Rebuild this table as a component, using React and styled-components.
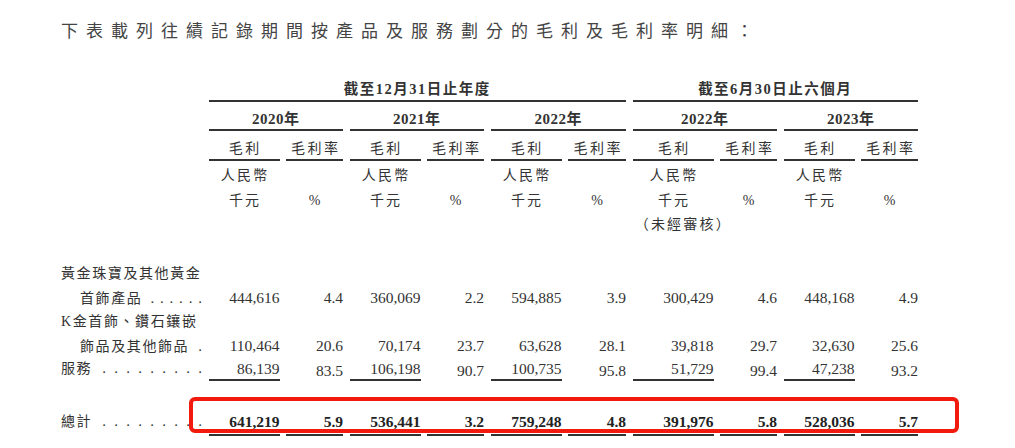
import React from "react";
import styled, { createGlobalStyle, css } from "styled-components";

const Global = createGlobalStyle`
  html, body { margin: 0; padding: 0; background: #ffffff; }
  body { font-family: "Liberation Serif", "Noto Sans CJK TC", serif; color: #333; }
`;

const Page = styled.div`
  position: relative;
  width: 1015px;
  height: 448px;
  overflow: hidden;
  box-sizing: border-box;
  padding: 16px 0 0 61px;
`;

const Title = styled.h1`
  margin: 0 0 35px 0;
  font-family: "Noto Sans CJK TC", sans-serif;
  font-weight: 400;
  font-size: 17px;
  line-height: 27px;
  height: 27px;
  letter-spacing: 8px;
  color: #444;
  white-space: nowrap;
`;

const Table = styled.div`
  display: grid;
  grid-template-columns: 141px 71px 57px 71px 57px 71px 58px 81px 57px 71px 57px;
  column-gap: 6.5px;
  color: #333;
`;

const Cjk = css`
  font-family: "Liberation Serif", "Noto Sans CJK TC", serif;
`;

const Blank = styled.div``;

const GroupHead = styled.div`
  ${Cjk};
  grid-column: span ${(p) => p.$span};
  text-align: center;
  font-weight: 700;
  font-size: 14.5px;
  letter-spacing: 1.5px;
  line-height: 22px;
  height: 22px;
  border-bottom: 2px solid #333;
`;

const YearHead = styled.div`
  ${Cjk};
  grid-column: span 2;
  text-align: center;
  font-weight: 700;
  font-size: 15px;
  letter-spacing: 0.5px;
  padding-top: 7px;
  line-height: 20px;
  height: 20px;
  border-bottom: 2px solid #333;
`;

const SubHead = styled.div`
  ${Cjk};
  text-align: center;
  font-size: 14px;
  letter-spacing: 2.4px;
  padding: 7px 0 0 2.4px;
  line-height: 21px;
  height: 21px;
  border-bottom: 2px solid #333;
`;

const Unit = styled.div`
  ${Cjk};
  text-align: center;
  font-size: 14px;
  letter-spacing: 2.2px;
  padding: 3px 0 0 2.2px;
  line-height: 24.5px;
  white-space: nowrap;
`;

const UnitLine = styled.div`
  height: 24.5px;
`;

const Spacer = styled.div`
  grid-column: 1 / -1;
  height: 24px;
`;

const Label = styled.div`
  ${Cjk};
  font-size: 14px;
  letter-spacing: 1.6px;
  line-height: ${(p) => p.$lh}px;
  padding-top: ${(p) => p.$pt || 0}px;
  color: #333;
`;

const LabelLine = styled.div`
  display: flex;
  align-items: baseline;
  white-space: nowrap;
  height: ${(p) => p.$lh}px;
  padding-left: ${(p) => (p.$indent ? 19 : 0)}px;
`;

const Leader = styled.span`
  flex: 1;
  display: flex;
  justify-content: ${(p) => (p.$single ? "flex-end" : "space-between")};
  padding-left: ${(p) => p.$gap}px;
  letter-spacing: 0;
  font-family: "Liberation Serif", serif;
  font-size: 15px;
`;

const Num = styled.div`
  font-family: "Liberation Serif", serif;
  font-size: 15.5px;
  text-align: right;
  align-self: end;
  white-space: nowrap;
  line-height: ${(p) => p.$lh}px;
  height: ${(p) => p.$lh}px;
  padding-top: ${(p) => p.$pt || 0}px;
  font-weight: ${(p) => (p.$bold ? 700 : 400)};
  color: ${(p) => (p.$bold ? "#222" : "#333")};
  border-bottom: ${(p) => (p.$rule ? `${p.$rule}px solid #333` : "none")};
`;

const Highlight = styled.div`
  position: absolute;
  left: 189px;
  top: 397px;
  width: 770px;
  height: 36px;
  box-sizing: border-box;
  border: 4px solid #f21a0c;
  border-radius: 6px;
  pointer-events: none;
`;

const years = ["2020年", "2021年", "2022年", "2022年", "2023年"];

const rows = [
  {
    label: ["黃金珠寶及其他黃金", "首飾產品"],
    dots: 6,
    gap: 8,
    values: ["444,616", "4.4", "360,069", "2.2", "594,885", "3.9", "300,429", "4.6", "448,168", "4.9"],
  },
  {
    label: ["K金首飾、鑽石鑲嵌", "飾品及其他飾品"],
    dots: 1,
    gap: 4,
    values: ["110,464", "20.6", "70,174", "23.7", "63,628", "28.1", "39,818", "29.7", "32,630", "25.6"],
  },
];

const service = ["86,139", "83.5", "106,198", "90.7", "100,735", "95.8", "51,729", "99.4", "47,238", "93.2"];
const total = ["641,219", "5.9", "536,441", "3.2", "759,248", "4.8", "391,976", "5.8", "528,036", "5.7"];

function Dots({ count, gap }) {
  return (
    <Leader $single={count === 1} $gap={gap}>
      {Array.from({ length: count }).map((_, i) => (
        <span key={i}>.</span>
      ))}
    </Leader>
  );
}

export default function App() {
  return (
    <>
      <Global />
      <Page>
        <Title>下表載列往績記錄期間按產品及服務劃分的毛利及毛利率明細：</Title>
        <Table>
          <Blank />
          <GroupHead $span={6}>截至12月31日止年度</GroupHead>
          <GroupHead $span={4}>截至6月30日止六個月</GroupHead>

          <Blank />
          {years.map((y, i) => (
            <YearHead key={i}>{y}</YearHead>
          ))}

          <Blank />
          {years.map((_, i) => (
            <React.Fragment key={i}>
              <SubHead>毛利</SubHead>
              <SubHead>毛利率</SubHead>
            </React.Fragment>
          ))}

          <Blank />
          {years.map((_, i) => (
            <React.Fragment key={i}>
              <Unit>
                <UnitLine>人民幣</UnitLine>
                <UnitLine>千元</UnitLine>
                {i === 3 && <UnitLine>（未經審核）</UnitLine>}
              </Unit>
              <Unit>
                <UnitLine>&nbsp;</UnitLine>
                <UnitLine>%</UnitLine>
              </Unit>
            </React.Fragment>
          ))}

          <Spacer />

          {rows.map((r, ri) => (
            <React.Fragment key={ri}>
              <Label $lh={24}>
                <LabelLine $lh={24}>{r.label[0]}</LabelLine>
                <LabelLine $lh={24} $indent>
                  {r.label[1]}
                  <Dots count={r.dots} gap={r.gap} />
                </LabelLine>
              </Label>
              {r.values.map((v, i) => (
                <Num key={i} $lh={24}>
                  {v}
                </Num>
              ))}
            </React.Fragment>
          ))}

          <Label $lh={21}>
            <LabelLine $lh={21}>
              服務
              <Dots count={9} gap={10} />
            </LabelLine>
          </Label>
          {service.map((v, i) => (
            <Num key={i} $lh={21} $rule={i % 2 === 0 ? 2 : 0}>
              {v}
            </Num>
          ))}

          <Label $lh={25} $pt={28}>
            <LabelLine $lh={25}>
              總計
              <Dots count={9} gap={10} />
            </LabelLine>
          </Label>
          {total.map((v, i) => (
            <Num key={i} $lh={25} $pt={28} $bold $rule={2.5}>
              {v}
            </Num>
          ))}
        </Table>
        <Highlight />
      </Page>
    </>
  );
}
